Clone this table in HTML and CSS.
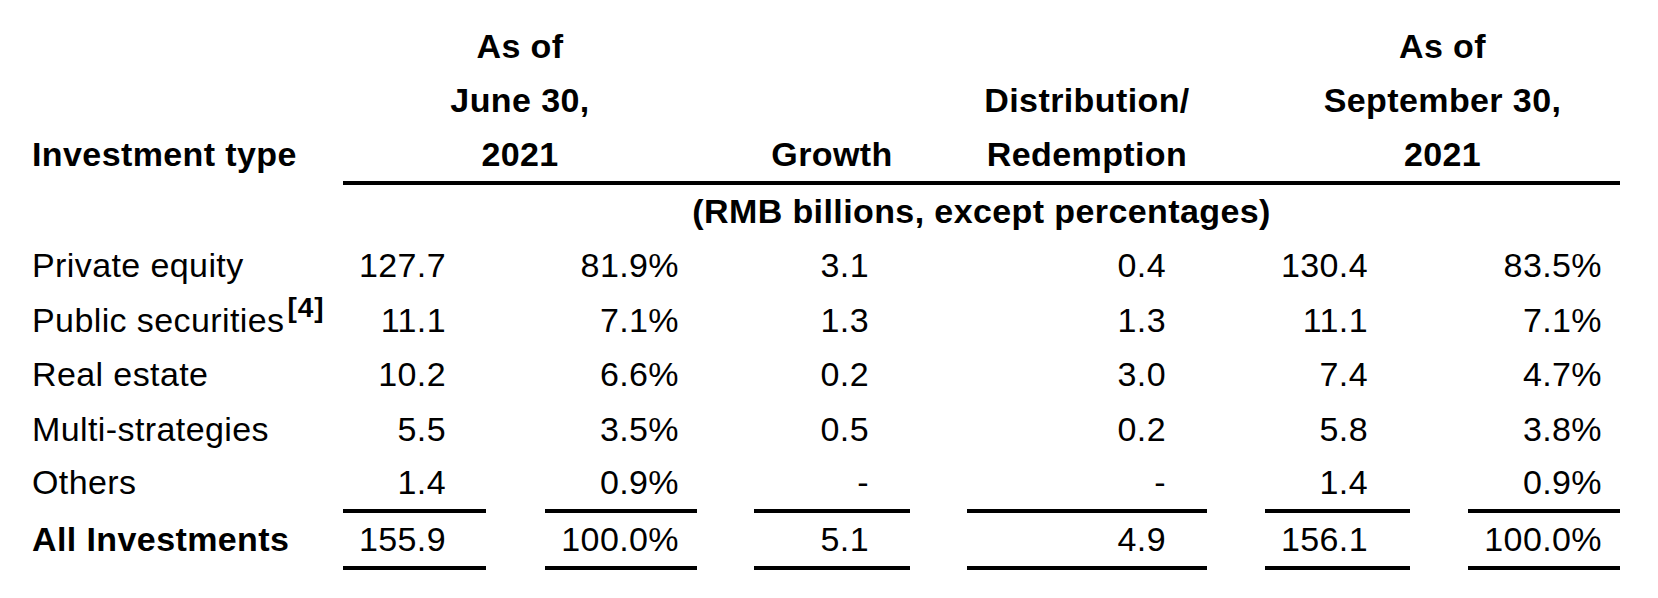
FILE: index.html
```html
<!DOCTYPE html>
<html lang="en">
<head>
<meta charset="utf-8">
<title>Investments</title>
<link rel="stylesheet" href="styles.css">
</head>
<body>
<div class="report">
  <div class="fin-table">
    <div class="label head-label">Investment type</div>
    <div class="head head-span-a"><span>As of<br>June 30,<br>2021</span></div>
    <div class="head head-growth"><span>Growth</span></div>
    <div class="head head-dist"><span>Distribution/<br>Redemption</span></div>
    <div class="head head-span-b"><span>As of<br>September 30,<br>2021</span></div>

    <div class="label"></div>
    <div class="unit-row">(RMB billions, except percentages)</div>

    <div class="label">Private equity</div>
    <div class="num c1">127.7</div>
    <div class="num c2">81.9%</div>
    <div class="num c3">3.1</div>
    <div class="num c4">0.4</div>
    <div class="num c5">130.4</div>
    <div class="num c6">83.5%</div>

    <div class="label">Public securities<sup class="note">[4]</sup></div>
    <div class="num c1">11.1</div>
    <div class="num c2">7.1%</div>
    <div class="num c3">1.3</div>
    <div class="num c4">1.3</div>
    <div class="num c5">11.1</div>
    <div class="num c6">7.1%</div>

    <div class="label">Real estate</div>
    <div class="num c1">10.2</div>
    <div class="num c2">6.6%</div>
    <div class="num c3">0.2</div>
    <div class="num c4">3.0</div>
    <div class="num c5">7.4</div>
    <div class="num c6">4.7%</div>

    <div class="label">Multi-strategies</div>
    <div class="num c1">5.5</div>
    <div class="num c2">3.5%</div>
    <div class="num c3">0.5</div>
    <div class="num c4">0.2</div>
    <div class="num c5">5.8</div>
    <div class="num c6">3.8%</div>

    <div class="label last">Others</div>
    <div class="num c1 rule last">1.4</div>
    <div class="num c2 rule last">0.9%</div>
    <div class="num c3 rule last">-</div>
    <div class="num c4 rule last">-</div>
    <div class="num c5 rule last">1.4</div>
    <div class="num c6 rule last">0.9%</div>

    <div class="label total">All Investments</div>
    <div class="num c1 rule sum">155.9</div>
    <div class="num c2 rule sum">100.0%</div>
    <div class="num c3 rule sum">5.1</div>
    <div class="num c4 rule sum">4.9</div>
    <div class="num c5 rule sum">156.1</div>
    <div class="num c6 rule sum">100.0%</div>
  </div>
</div>
</body>
</html>
```

FILE: styles.css
```css
html, body {
  margin: 0;
  padding: 0;
  background: #ffffff;
}

body {
  color: #000000;
  font-family: "Liberation Sans", Arial, sans-serif;
  font-size: 34px;
  letter-spacing: 0.4px;
}

.report {
  padding-top: 19px;
}

.fin-table {
  display: grid;
  grid-template-columns: 343px 143px 211px 213px 297px 203px 210px;
  line-height: 54.5px;
}

.head {
  display: flex;
  flex-direction: column;
  justify-content: flex-end;
  text-align: center;
  font-weight: bold;
  line-height: 54px;
  border-bottom: 4px solid #000000;
}

.head-label {
  align-self: end;
  font-weight: bold;
  line-height: 54px;
  padding-bottom: 4px;
}

.head-span-a {
  grid-column: span 2;
}

.head-growth,
.head-dist {
  padding-left: 57px;
}

.head-span-b {
  grid-column: span 2;
  padding-left: 58px;
}

.unit-row {
  grid-column: 2 / 8;
  text-align: center;
  font-weight: bold;
  line-height: 53px;
}

.label {
  padding-left: 32px;
  white-space: nowrap;
}

.last {
  line-height: 53px;
}

.total {
  font-weight: bold;
  line-height: 53px;
}

.sum {
  line-height: 53px;
}

.note {
  font-size: 28px;
  font-weight: bold;
  line-height: 1;
  letter-spacing: 1px;
  vertical-align: 15px;
  margin-left: 3px;
}

.num {
  text-align: right;
  white-space: nowrap;
}

.c1 { padding-right: 40px; }
.c2 { margin-left: 59px; padding-right: 18px; }
.c3 { margin-left: 57px; padding-right: 41px; }
.c4 { margin-left: 57px; padding-right: 41px; }
.c5 { margin-left: 58px; padding-right: 42px; }
.c6 { margin-left: 58px; padding-right: 18px; }

.rule {
  border-bottom: 4px solid #000000;
}
```
